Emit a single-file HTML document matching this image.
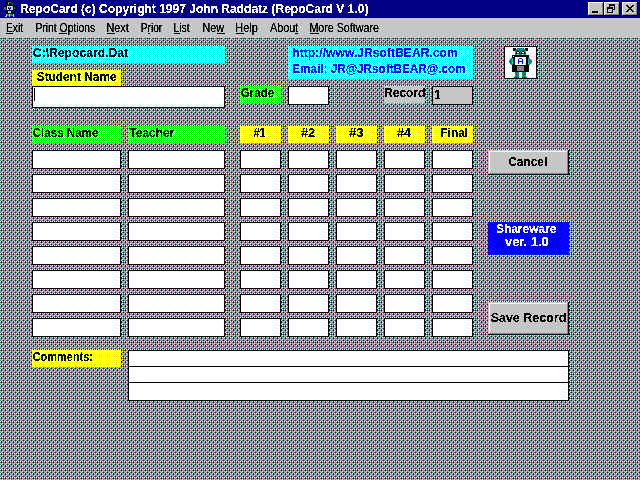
<!DOCTYPE html>
<html><head><meta charset="utf-8"><title>RepoCard</title>
<style>
html,body{margin:0;padding:0;background:#6596ca;overflow:hidden}
svg{display:block}
text{font-family:"Liberation Sans",sans-serif;font-size:12px;white-space:pre}
.b{font-weight:bold}
.m{font-weight:normal}
</style></head><body>
<svg width="640" height="480" viewBox="0 0 640 480" shape-rendering="crispEdges">
<defs><pattern id="bg" x="0" y="6" width="8" height="8" patternUnits="userSpaceOnUse"><rect width="8" height="8" fill="#848484"/><rect x="1" y="0" width="1" height="1" fill="#00f"/><rect x="3" y="0" width="1" height="1" fill="#00f"/><rect x="5" y="0" width="1" height="1" fill="#00f"/><rect x="7" y="0" width="1" height="1" fill="#0ff"/><rect x="0" y="1" width="1" height="1" fill="#0ff"/><rect x="2" y="1" width="1" height="1" fill="#fff"/><rect x="4" y="1" width="1" height="1" fill="#0ff"/><rect x="6" y="1" width="1" height="1" fill="#fff"/><rect x="1" y="2" width="1" height="1" fill="#0ff"/><rect x="3" y="2" width="1" height="1" fill="#00f"/><rect x="5" y="2" width="1" height="1" fill="#0ff"/><rect x="7" y="2" width="1" height="1" fill="#00f"/><rect x="0" y="3" width="1" height="1" fill="#fff"/><rect x="1" y="3" width="1" height="1" fill="#00f"/><rect x="2" y="3" width="1" height="1" fill="#0ff"/><rect x="4" y="3" width="1" height="1" fill="#fff"/><rect x="5" y="3" width="1" height="1" fill="#00f"/><rect x="6" y="3" width="1" height="1" fill="#fff"/><rect x="1" y="4" width="1" height="1" fill="#00f"/><rect x="3" y="4" width="1" height="1" fill="#0ff"/><rect x="5" y="4" width="1" height="1" fill="#00f"/><rect x="7" y="4" width="1" height="1" fill="#0ff"/><rect x="0" y="5" width="1" height="1" fill="#0ff"/><rect x="2" y="5" width="1" height="1" fill="#fff"/><rect x="4" y="5" width="1" height="1" fill="#0ff"/><rect x="6" y="5" width="1" height="1" fill="#fff"/><rect x="1" y="6" width="1" height="1" fill="#0ff"/><rect x="3" y="6" width="1" height="1" fill="#00f"/><rect x="5" y="6" width="1" height="1" fill="#0ff"/><rect x="7" y="6" width="1" height="1" fill="#00f"/><rect x="0" y="7" width="1" height="1" fill="#fff"/><rect x="1" y="7" width="1" height="1" fill="#00f"/><rect x="2" y="7" width="1" height="1" fill="#fff"/><rect x="4" y="7" width="1" height="1" fill="#fff"/><rect x="5" y="7" width="1" height="1" fill="#00f"/><rect x="6" y="7" width="1" height="1" fill="#fff"/></pattern><pattern id="cy" x="0" y="0" width="2" height="2" patternUnits="userSpaceOnUse"><rect width="2" height="2" fill="#fff"/><rect x="0" y="0" width="1" height="1" fill="#0ff"/><rect x="1" y="1" width="1" height="1" fill="#0ff"/></pattern><pattern id="ye" x="0" y="0" width="2" height="2" patternUnits="userSpaceOnUse"><rect width="2" height="2" fill="#fff"/><rect x="0" y="0" width="1" height="1" fill="#ff0"/><rect x="1" y="1" width="1" height="1" fill="#ff0"/></pattern><pattern id="gr" x="0" y="0" width="2" height="2" patternUnits="userSpaceOnUse"><rect width="2" height="2" fill="#fff"/><rect x="0" y="0" width="1" height="1" fill="#0f0"/><rect x="1" y="1" width="1" height="1" fill="#0f0"/></pattern><filter id="al" filterUnits="userSpaceOnUse" x="0" y="0" width="640" height="480" color-interpolation-filters="sRGB"><feComponentTransfer><feFuncA type="discrete" tableValues="0 0 1 1 1"/></feComponentTransfer></filter><filter id="am" filterUnits="userSpaceOnUse" x="0" y="18" width="640" height="20" color-interpolation-filters="sRGB"><feComponentTransfer><feFuncA type="linear" slope="2.4" intercept="-0.3"/></feComponentTransfer></filter><clipPath id="rc"><rect x="384" y="86" width="41" height="17"/></clipPath></defs>
<rect x="0" y="0" width="640" height="480" fill="url(#bg)"/>
<rect x="0" y="0" width="640" height="18" fill="#000084"/>
<rect x="0" y="18" width="640" height="20" fill="#c6c6c6"/>
<rect x="6" y="33" width="7" height="1" fill="#000"/>
<rect x="59" y="33" width="8" height="1" fill="#000"/>
<rect x="107" y="33" width="8" height="1" fill="#000"/>
<rect x="148" y="33" width="2" height="1" fill="#000"/>
<rect x="174" y="33" width="6" height="1" fill="#000"/>
<rect x="217" y="33" width="8" height="1" fill="#000"/>
<rect x="236" y="33" width="8" height="1" fill="#000"/>
<rect x="295" y="33" width="3" height="1" fill="#000"/>
<rect x="310" y="33" width="9" height="1" fill="#000"/>
<rect x="32" y="46" width="193" height="17" fill="url(#cy)"/>
<rect x="32" y="70" width="89" height="16" fill="url(#ye)"/>
<rect x="32" y="86" width="193" height="22" fill="#000"/>
<rect x="33" y="87" width="191" height="20" fill="#fff"/>
<rect x="34" y="88" width="1" height="13" fill="#000"/>
<rect x="240" y="86" width="41" height="17" fill="url(#gr)"/>
<rect x="288" y="86" width="41" height="19" fill="#000"/>
<rect x="289" y="87" width="39" height="17" fill="#fff"/>
<rect x="384" y="86" width="41" height="17" fill="#c6c6c6"/>
<rect x="432" y="86" width="41" height="19" fill="#000"/>
<rect x="433" y="87" width="39" height="17" fill="#c6c6c6"/>
<rect x="288" y="46" width="185" height="33" fill="url(#cy)"/>
<rect x="32" y="126" width="89" height="17" fill="url(#gr)"/>
<rect x="128" y="126" width="97" height="17" fill="url(#gr)"/>
<rect x="240" y="126" width="41" height="17" fill="url(#ye)"/>
<rect x="288" y="126" width="41" height="17" fill="url(#ye)"/>
<rect x="336" y="126" width="41" height="17" fill="url(#ye)"/>
<rect x="384" y="126" width="41" height="17" fill="url(#ye)"/>
<rect x="432" y="126" width="41" height="17" fill="url(#ye)"/>
<rect x="32" y="150" width="89" height="19" fill="#000"/>
<rect x="33" y="151" width="87" height="17" fill="#fff"/>
<rect x="128" y="150" width="97" height="19" fill="#000"/>
<rect x="129" y="151" width="95" height="17" fill="#fff"/>
<rect x="240" y="150" width="41" height="19" fill="#000"/>
<rect x="241" y="151" width="39" height="17" fill="#fff"/>
<rect x="288" y="150" width="41" height="19" fill="#000"/>
<rect x="289" y="151" width="39" height="17" fill="#fff"/>
<rect x="336" y="150" width="41" height="19" fill="#000"/>
<rect x="337" y="151" width="39" height="17" fill="#fff"/>
<rect x="384" y="150" width="41" height="19" fill="#000"/>
<rect x="385" y="151" width="39" height="17" fill="#fff"/>
<rect x="432" y="150" width="41" height="19" fill="#000"/>
<rect x="433" y="151" width="39" height="17" fill="#fff"/>
<rect x="32" y="174" width="89" height="19" fill="#000"/>
<rect x="33" y="175" width="87" height="17" fill="#fff"/>
<rect x="128" y="174" width="97" height="19" fill="#000"/>
<rect x="129" y="175" width="95" height="17" fill="#fff"/>
<rect x="240" y="174" width="41" height="19" fill="#000"/>
<rect x="241" y="175" width="39" height="17" fill="#fff"/>
<rect x="288" y="174" width="41" height="19" fill="#000"/>
<rect x="289" y="175" width="39" height="17" fill="#fff"/>
<rect x="336" y="174" width="41" height="19" fill="#000"/>
<rect x="337" y="175" width="39" height="17" fill="#fff"/>
<rect x="384" y="174" width="41" height="19" fill="#000"/>
<rect x="385" y="175" width="39" height="17" fill="#fff"/>
<rect x="432" y="174" width="41" height="19" fill="#000"/>
<rect x="433" y="175" width="39" height="17" fill="#fff"/>
<rect x="32" y="198" width="89" height="19" fill="#000"/>
<rect x="33" y="199" width="87" height="17" fill="#fff"/>
<rect x="128" y="198" width="97" height="19" fill="#000"/>
<rect x="129" y="199" width="95" height="17" fill="#fff"/>
<rect x="240" y="198" width="41" height="19" fill="#000"/>
<rect x="241" y="199" width="39" height="17" fill="#fff"/>
<rect x="288" y="198" width="41" height="19" fill="#000"/>
<rect x="289" y="199" width="39" height="17" fill="#fff"/>
<rect x="336" y="198" width="41" height="19" fill="#000"/>
<rect x="337" y="199" width="39" height="17" fill="#fff"/>
<rect x="384" y="198" width="41" height="19" fill="#000"/>
<rect x="385" y="199" width="39" height="17" fill="#fff"/>
<rect x="432" y="198" width="41" height="19" fill="#000"/>
<rect x="433" y="199" width="39" height="17" fill="#fff"/>
<rect x="32" y="222" width="89" height="19" fill="#000"/>
<rect x="33" y="223" width="87" height="17" fill="#fff"/>
<rect x="128" y="222" width="97" height="19" fill="#000"/>
<rect x="129" y="223" width="95" height="17" fill="#fff"/>
<rect x="240" y="222" width="41" height="19" fill="#000"/>
<rect x="241" y="223" width="39" height="17" fill="#fff"/>
<rect x="288" y="222" width="41" height="19" fill="#000"/>
<rect x="289" y="223" width="39" height="17" fill="#fff"/>
<rect x="336" y="222" width="41" height="19" fill="#000"/>
<rect x="337" y="223" width="39" height="17" fill="#fff"/>
<rect x="384" y="222" width="41" height="19" fill="#000"/>
<rect x="385" y="223" width="39" height="17" fill="#fff"/>
<rect x="432" y="222" width="41" height="19" fill="#000"/>
<rect x="433" y="223" width="39" height="17" fill="#fff"/>
<rect x="32" y="246" width="89" height="19" fill="#000"/>
<rect x="33" y="247" width="87" height="17" fill="#fff"/>
<rect x="128" y="246" width="97" height="19" fill="#000"/>
<rect x="129" y="247" width="95" height="17" fill="#fff"/>
<rect x="240" y="246" width="41" height="19" fill="#000"/>
<rect x="241" y="247" width="39" height="17" fill="#fff"/>
<rect x="288" y="246" width="41" height="19" fill="#000"/>
<rect x="289" y="247" width="39" height="17" fill="#fff"/>
<rect x="336" y="246" width="41" height="19" fill="#000"/>
<rect x="337" y="247" width="39" height="17" fill="#fff"/>
<rect x="384" y="246" width="41" height="19" fill="#000"/>
<rect x="385" y="247" width="39" height="17" fill="#fff"/>
<rect x="432" y="246" width="41" height="19" fill="#000"/>
<rect x="433" y="247" width="39" height="17" fill="#fff"/>
<rect x="32" y="270" width="89" height="19" fill="#000"/>
<rect x="33" y="271" width="87" height="17" fill="#fff"/>
<rect x="128" y="270" width="97" height="19" fill="#000"/>
<rect x="129" y="271" width="95" height="17" fill="#fff"/>
<rect x="240" y="270" width="41" height="19" fill="#000"/>
<rect x="241" y="271" width="39" height="17" fill="#fff"/>
<rect x="288" y="270" width="41" height="19" fill="#000"/>
<rect x="289" y="271" width="39" height="17" fill="#fff"/>
<rect x="336" y="270" width="41" height="19" fill="#000"/>
<rect x="337" y="271" width="39" height="17" fill="#fff"/>
<rect x="384" y="270" width="41" height="19" fill="#000"/>
<rect x="385" y="271" width="39" height="17" fill="#fff"/>
<rect x="432" y="270" width="41" height="19" fill="#000"/>
<rect x="433" y="271" width="39" height="17" fill="#fff"/>
<rect x="32" y="294" width="89" height="19" fill="#000"/>
<rect x="33" y="295" width="87" height="17" fill="#fff"/>
<rect x="128" y="294" width="97" height="19" fill="#000"/>
<rect x="129" y="295" width="95" height="17" fill="#fff"/>
<rect x="240" y="294" width="41" height="19" fill="#000"/>
<rect x="241" y="295" width="39" height="17" fill="#fff"/>
<rect x="288" y="294" width="41" height="19" fill="#000"/>
<rect x="289" y="295" width="39" height="17" fill="#fff"/>
<rect x="336" y="294" width="41" height="19" fill="#000"/>
<rect x="337" y="295" width="39" height="17" fill="#fff"/>
<rect x="384" y="294" width="41" height="19" fill="#000"/>
<rect x="385" y="295" width="39" height="17" fill="#fff"/>
<rect x="432" y="294" width="41" height="19" fill="#000"/>
<rect x="433" y="295" width="39" height="17" fill="#fff"/>
<rect x="32" y="318" width="89" height="19" fill="#000"/>
<rect x="33" y="319" width="87" height="17" fill="#fff"/>
<rect x="128" y="318" width="97" height="19" fill="#000"/>
<rect x="129" y="319" width="95" height="17" fill="#fff"/>
<rect x="240" y="318" width="41" height="19" fill="#000"/>
<rect x="241" y="319" width="39" height="17" fill="#fff"/>
<rect x="288" y="318" width="41" height="19" fill="#000"/>
<rect x="289" y="319" width="39" height="17" fill="#fff"/>
<rect x="336" y="318" width="41" height="19" fill="#000"/>
<rect x="337" y="319" width="39" height="17" fill="#fff"/>
<rect x="384" y="318" width="41" height="19" fill="#000"/>
<rect x="385" y="319" width="39" height="17" fill="#fff"/>
<rect x="432" y="318" width="41" height="19" fill="#000"/>
<rect x="433" y="319" width="39" height="17" fill="#fff"/>
<rect x="488" y="150" width="81" height="25" fill="#000"/>
<rect x="488" y="150" width="80" height="24" fill="#c6c6c6"/>
<rect x="489" y="151" width="79" height="23" fill="#848484"/>
<rect x="489" y="151" width="78" height="22" fill="#fff"/>
<rect x="490" y="152" width="77" height="21" fill="#c6c6c6"/>
<rect x="488" y="302" width="81" height="33" fill="#000"/>
<rect x="488" y="302" width="80" height="32" fill="#c6c6c6"/>
<rect x="489" y="303" width="79" height="31" fill="#848484"/>
<rect x="489" y="303" width="78" height="30" fill="#fff"/>
<rect x="490" y="304" width="77" height="29" fill="#c6c6c6"/>
<rect x="488" y="222" width="81" height="33" fill="#00f"/>
<rect x="32" y="350" width="89" height="17" fill="url(#ye)"/>
<rect x="128" y="350" width="441" height="51" fill="#000"/>
<rect x="129" y="351" width="439" height="49" fill="#fff"/>
<rect x="128" y="366" width="441" height="1" fill="#000"/>
<rect x="128" y="382" width="441" height="1" fill="#000"/>
<rect x="588" y="2" width="16" height="14" fill="#000"/>
<rect x="588" y="2" width="15" height="13" fill="#fff"/>
<rect x="589" y="3" width="14" height="12" fill="#848484"/>
<rect x="589" y="3" width="13" height="11" fill="#c6c6c6"/>
<rect x="604" y="2" width="16" height="14" fill="#000"/>
<rect x="604" y="2" width="15" height="13" fill="#fff"/>
<rect x="605" y="3" width="14" height="12" fill="#848484"/>
<rect x="605" y="3" width="13" height="11" fill="#c6c6c6"/>
<rect x="622" y="2" width="16" height="14" fill="#000"/>
<rect x="622" y="2" width="15" height="13" fill="#fff"/>
<rect x="623" y="3" width="14" height="12" fill="#848484"/>
<rect x="623" y="3" width="13" height="11" fill="#c6c6c6"/>
<rect x="592" y="11" width="6" height="2" fill="#000"/>
<rect x="609" y="4" width="6" height="2" fill="#000"/>
<rect x="609" y="6" width="1" height="1" fill="#000"/>
<rect x="614" y="6" width="1" height="4" fill="#000"/>
<rect x="613" y="9" width="2" height="1" fill="#000"/>
<rect x="607" y="7" width="6" height="2" fill="#000"/>
<rect x="607" y="9" width="1" height="4" fill="#000"/>
<rect x="612" y="9" width="1" height="4" fill="#000"/>
<rect x="607" y="12" width="6" height="1" fill="#000"/>
<rect x="626" y="5" width="2" height="1" fill="#000"/>
<rect x="632" y="5" width="2" height="1" fill="#000"/>
<rect x="627" y="6" width="2" height="1" fill="#000"/>
<rect x="631" y="6" width="2" height="1" fill="#000"/>
<rect x="628" y="7" width="2" height="1" fill="#000"/>
<rect x="630" y="7" width="2" height="1" fill="#000"/>
<rect x="629" y="8" width="2" height="1" fill="#000"/>
<rect x="629" y="8" width="2" height="1" fill="#000"/>
<rect x="630" y="9" width="2" height="1" fill="#000"/>
<rect x="628" y="9" width="2" height="1" fill="#000"/>
<rect x="631" y="10" width="2" height="1" fill="#000"/>
<rect x="627" y="10" width="2" height="1" fill="#000"/>
<rect x="632" y="11" width="2" height="1" fill="#000"/>
<rect x="626" y="11" width="2" height="1" fill="#000"/>
<rect x="504" y="46" width="33" height="33" fill="#000"/>
<rect x="505" y="47" width="31" height="31" fill="#fff"/>
<rect x="513" y="48" width="3" height="3" fill="#000"/>
<rect x="525" y="48" width="3" height="3" fill="#000"/>
<rect x="517" y="48" width="7" height="1" fill="#008484"/>
<rect x="516" y="49" width="9" height="1" fill="#008484"/>
<rect x="515" y="50" width="11" height="5" fill="#008484"/>
<rect x="517" y="51" width="2" height="1" fill="#000"/>
<rect x="516" y="52" width="4" height="2" fill="#000"/>
<rect x="517" y="52" width="2" height="1" fill="#fff"/>
<rect x="517" y="53" width="2" height="1" fill="#008400"/>
<rect x="522" y="51" width="2" height="1" fill="#000"/>
<rect x="521" y="52" width="4" height="2" fill="#000"/>
<rect x="522" y="52" width="2" height="1" fill="#fff"/>
<rect x="522" y="53" width="2" height="1" fill="#008400"/>
<rect x="512" y="55" width="17" height="17" fill="#000"/>
<rect x="512" y="58" width="1" height="7" fill="#008484"/>
<rect x="528" y="58" width="1" height="7" fill="#008484"/>
<rect x="511" y="58" width="1" height="7" fill="#008484"/>
<rect x="529" y="58" width="1" height="7" fill="#008484"/>
<rect x="510" y="59" width="1" height="5" fill="#008484"/>
<rect x="530" y="59" width="1" height="5" fill="#008484"/>
<rect x="509" y="60" width="1" height="3" fill="#008484"/>
<rect x="531" y="60" width="1" height="3" fill="#008484"/>
<rect x="517" y="54" width="1" height="1" fill="#c6c6c6"/>
<rect x="518" y="54" width="1" height="1" fill="#c6c6c6"/>
<rect x="522" y="54" width="1" height="1" fill="#c6c6c6"/>
<rect x="523" y="54" width="1" height="1" fill="#c6c6c6"/>
<rect x="513" y="56" width="1" height="1" fill="#fff"/>
<rect x="515" y="57" width="11" height="8" fill="#fff"/>
<rect x="519" y="58" width="3" height="1" fill="#0000ff"/>
<rect x="518" y="59" width="1" height="5" fill="#0000ff"/>
<rect x="522" y="59" width="1" height="5" fill="#0000ff"/>
<rect x="518" y="61" width="5" height="1" fill="#0000ff"/>
<rect x="512" y="59" width="1" height="1" fill="#0ff"/>
<rect x="528" y="59" width="1" height="1" fill="#0ff"/>
<rect x="512" y="61" width="1" height="1" fill="#0ff"/>
<rect x="528" y="61" width="1" height="1" fill="#0ff"/>
<rect x="512" y="63" width="1" height="1" fill="#0ff"/>
<rect x="528" y="63" width="1" height="1" fill="#0ff"/>
<rect x="517" y="66" width="7" height="5" fill="#848484"/>
<rect x="515" y="72" width="4" height="5" fill="#008484"/>
<rect x="522" y="72" width="4" height="5" fill="#008484"/>
<rect x="514" y="77" width="1" height="1" fill="#0000ff"/>
<rect x="516" y="77" width="1" height="1" fill="#0000ff"/>
<rect x="518" y="77" width="1" height="1" fill="#0000ff"/>
<rect x="522" y="77" width="1" height="1" fill="#0000ff"/>
<rect x="524" y="77" width="1" height="1" fill="#0000ff"/>
<rect x="526" y="77" width="1" height="1" fill="#0000ff"/>
<rect x="515" y="77" width="1" height="1" fill="#008484"/>
<rect x="517" y="77" width="1" height="1" fill="#008484"/>
<rect x="523" y="77" width="1" height="1" fill="#008484"/>
<rect x="525" y="77" width="1" height="1" fill="#008484"/>
<rect x="6" y="1" width="8" height="5" fill="#000"/>
<rect x="8" y="2" width="4" height="1" fill="#008484"/>
<rect x="12" y="3" width="1" height="2" fill="#008484"/>
<rect x="8" y="3" width="1" height="1" fill="#c6c6c6"/>
<rect x="8" y="4" width="1" height="1" fill="#008400"/>
<rect x="5" y="5" width="9" height="9" fill="#000"/>
<rect x="4" y="6" width="12" height="4" fill="#000"/>
<rect x="4" y="7" width="2" height="3" fill="#008484"/>
<rect x="14" y="7" width="1" height="2" fill="#008484"/>
<rect x="7" y="6" width="6" height="4" fill="#fff"/>
<rect x="8" y="7" width="1" height="2" fill="#0000ff"/>
<rect x="10" y="7" width="1" height="2" fill="#0000ff"/>
<rect x="9" y="8" width="1" height="2" fill="#000"/>
<rect x="12" y="6" width="1" height="4" fill="#c6c6c6"/>
<rect x="8" y="11" width="3" height="2" fill="#c6c6c6"/>
<rect x="6" y="14" width="8" height="2" fill="#008484"/>
<rect x="6" y="14" width="1" height="3" fill="#c6c6c6"/>
<rect x="9" y="14" width="1" height="3" fill="#c6c6c6"/>
<rect x="13" y="14" width="1" height="3" fill="#c6c6c6"/>
<rect x="5" y="16" width="1" height="1" fill="#c6c6c6"/>
<g filter="url(#al)">
<text x="20.2" y="13" class="b" fill="#fff" textLength="348.2" lengthAdjust="spacingAndGlyphs">RepoCard (c) Copyright 1997 John Raddatz (RepoCard V 1.0)</text>
<text x="32.86" y="57" class="b" textLength="95.23" lengthAdjust="spacingAndGlyphs">C:\Repocard.Dat</text>
<text x="36.71" y="81" class="b" textLength="79.93" lengthAdjust="spacingAndGlyphs">Student Name</text>
<text x="240.81" y="97" class="b" textLength="33.45" lengthAdjust="spacingAndGlyphs">Grade</text>
<g clip-path="url(#rc)">
<text x="384.2" y="97" class="b" textLength="41.2" lengthAdjust="spacingAndGlyphs">Record</text>
</g>
<text x="434" y="99" class="b">1</text>
<text x="292.31" y="57" class="b" fill="#00f" textLength="165.53" lengthAdjust="spacingAndGlyphs">http://www.JRsoftBEAR.com</text>
<text x="292.2" y="73" class="b" fill="#00f" textLength="173.45" lengthAdjust="spacingAndGlyphs">Email: JR@JRsoftBEAR@.com</text>
<text x="32.75" y="137" class="b" textLength="65.6" lengthAdjust="spacingAndGlyphs">Class Name</text>
<text x="129.28" y="137" class="b" textLength="45.17" lengthAdjust="spacingAndGlyphs">Teacher</text>
<text x="253.46" y="137" class="b" textLength="12.18" lengthAdjust="spacingAndGlyphs">#1</text>
<text x="300.93" y="137" class="b" textLength="14.36" lengthAdjust="spacingAndGlyphs">#2</text>
<text x="349.02" y="137" class="b" textLength="14.72" lengthAdjust="spacingAndGlyphs">#3</text>
<text x="396.93" y="137" class="b" textLength="13.97" lengthAdjust="spacingAndGlyphs">#4</text>
<text x="440.35" y="137" class="b" textLength="27.72" lengthAdjust="spacingAndGlyphs">Final</text>
<text x="508.29" y="166" class="b" textLength="38.9" lengthAdjust="spacingAndGlyphs">Cancel</text>
<text x="490.67" y="322" class="b" textLength="75.61" lengthAdjust="spacingAndGlyphs">Save Record</text>
<text x="495.95" y="233" class="b" fill="#fff" textLength="60.45" lengthAdjust="spacingAndGlyphs">Shareware</text>
<text x="504.99" y="246" class="b" fill="#fff" textLength="43.72" lengthAdjust="spacingAndGlyphs">ver. 1.0</text>
<text x="32.68" y="361" class="b" textLength="60.32" lengthAdjust="spacingAndGlyphs">Comments:</text>
</g>
<g filter="url(#am)">
<text x="6.04" y="32" class="m" textLength="16.99" lengthAdjust="spacingAndGlyphs">Exit</text>
<text x="35.43" y="32" class="m" textLength="59.85" lengthAdjust="spacingAndGlyphs">Print Options</text>
<text x="106.39" y="32" class="m" textLength="22.37" lengthAdjust="spacingAndGlyphs">Next</text>
<text x="140.75" y="32" class="m" textLength="21.39" lengthAdjust="spacingAndGlyphs">Prior</text>
<text x="173.45" y="32" class="m" textLength="16.09" lengthAdjust="spacingAndGlyphs">List</text>
<text x="202.43" y="32" class="m" textLength="21.6" lengthAdjust="spacingAndGlyphs">New</text>
<text x="235.28" y="32" class="m" textLength="22.54" lengthAdjust="spacingAndGlyphs">Help</text>
<text x="269.92" y="32" class="m" textLength="28.39" lengthAdjust="spacingAndGlyphs">About</text>
<text x="309.39" y="32" class="m" textLength="69.57" lengthAdjust="spacingAndGlyphs">More Software</text>
</g>
</svg>
</body></html>
